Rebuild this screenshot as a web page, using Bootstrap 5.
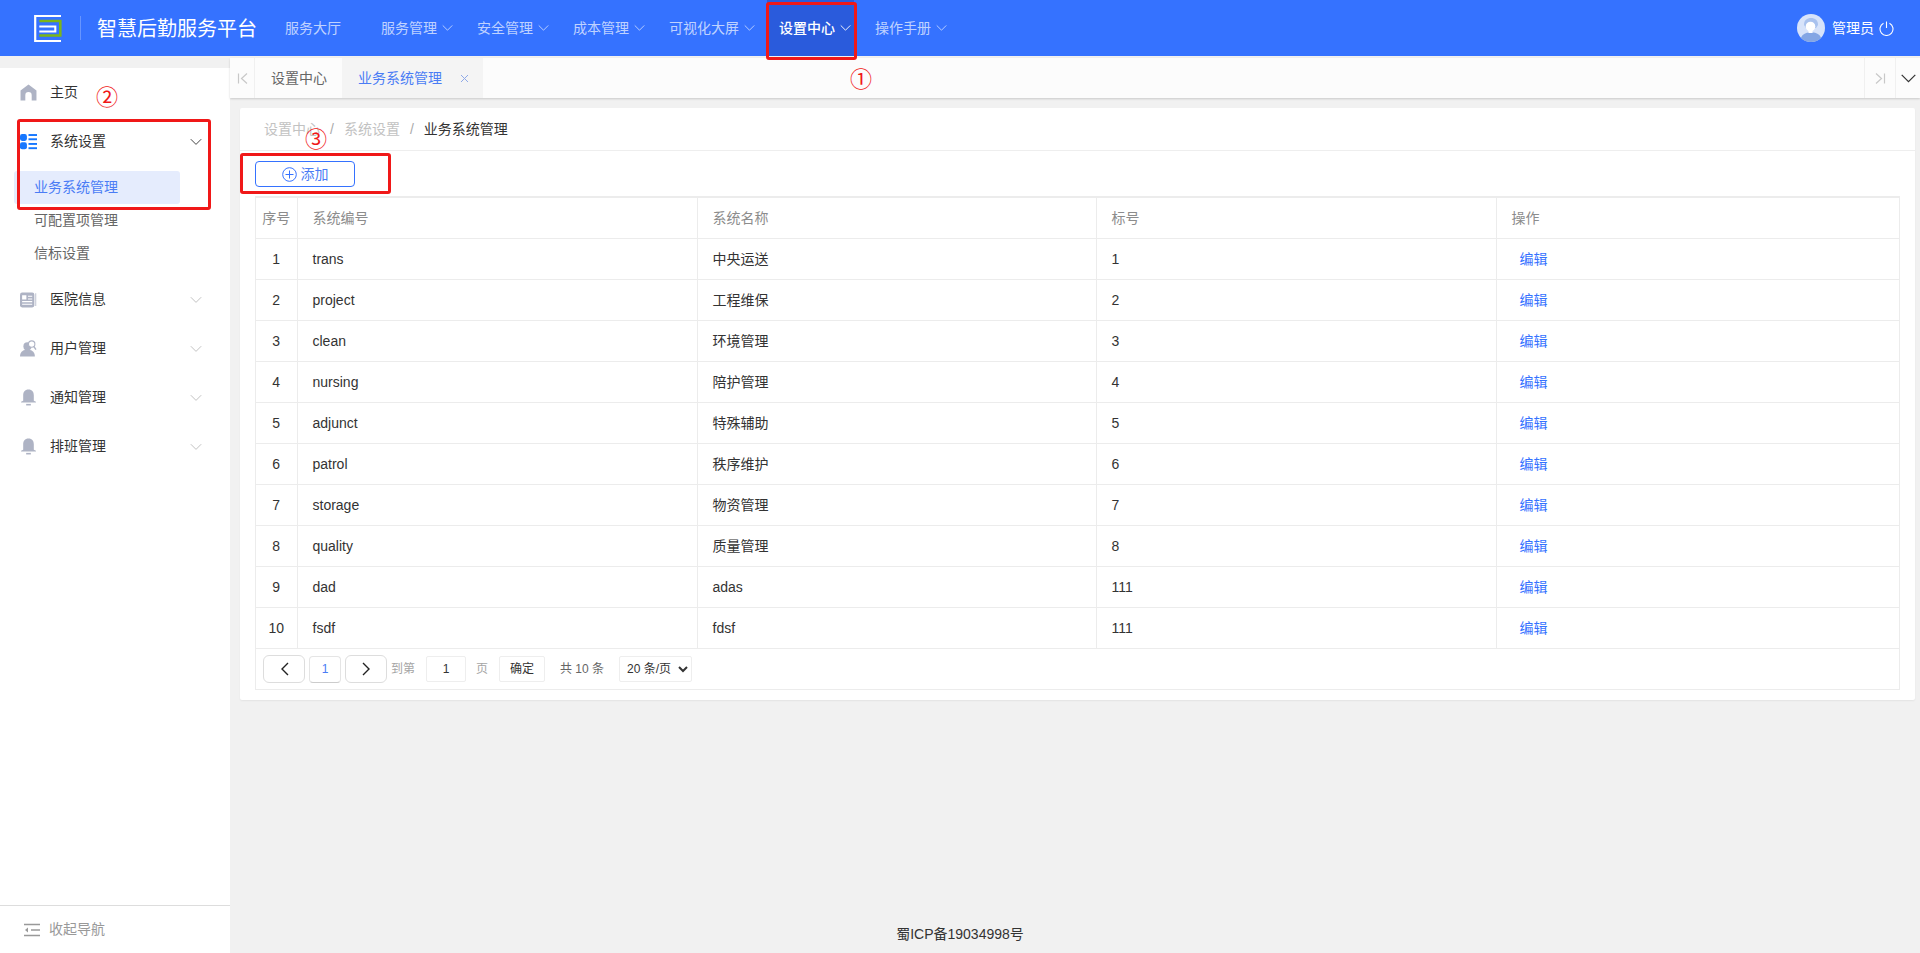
<!DOCTYPE html>
<html lang="zh-CN">
<head>
<meta charset="utf-8">
<title>智慧后勤服务平台</title>
<link rel="stylesheet" href="https://cdn.jsdelivr.net/npm/bootstrap@5.3.0/dist/css/bootstrap.min.css">
<style>
html,body{height:100%;}
body{font-family:"Liberation Sans","Noto Sans CJK SC",sans-serif;font-size:14px;background:#f1f1f1;color:#333;overflow:hidden;position:relative;}
.top-bar{height:56px;background:#3572ff;padding:0;flex-wrap:nowrap;}
.brand-logo{margin-left:34px;width:28px;height:27px;display:block;}
.brand-sep{width:1px;height:24px;background:rgba(255,255,255,.25);margin:0 16px 0 18px;}
.brand-name{font-size:20px;color:#fff;line-height:1;width:159px;white-space:nowrap;margin-right:17px;position:relative;top:1px;}
.top-link{height:56px;display:flex;align-items:center;gap:5px;padding:0 12px;color:rgba(255,255,255,.7);text-decoration:none;font-size:14px;white-space:nowrap;}
.top-link.plain{margin-right:16px;}
.top-link.on{background:#2a5bdc;color:#fff;font-weight:500;padding-right:3px;margin-right:9px;}
.top-link svg{width:11px;height:8px;}
.top-user{margin-left:auto;padding-right:26px;color:#fff;}
.top-user svg.ava{width:28px;height:28px;display:block;margin-right:7px;}
.top-user svg.pw{width:15px;height:15px;margin-left:5px;}
.page-body{height:calc(100% - 56px);}
.side-nav{width:230px;flex:none;margin-top:12px;background:#fff;}
.side-list{flex:1 1 auto;}
.side-item{height:49px;display:flex;align-items:center;padding:0 28px 0 20px;color:#333;}
.side-item .ico{width:17px;height:17px;margin-right:13px;flex:none;}
.side-item .chev{margin-left:auto;width:12px;height:8px;}
.sub-list{padding:5px 0;}
.sub-item{height:33px;display:flex;align-items:center;padding-left:34px;color:#666;}
.sub-item.on{background:#e5ecfd;color:#4a7cf5;width:166px;margin-left:14px;padding-left:20px;border-radius:3px;}
.side-foot{height:48px;border-top:1px solid #ddd;display:flex;align-items:center;padding-left:24px;color:#999;gap:9px;}
.side-foot svg{width:16px;height:14px;}
.main-area{min-width:0;position:relative;}
.tab-strip{height:40px;margin-top:2px;background:#fcfcfc;box-shadow:0 1px 2px rgba(0,0,0,.16);flex:none;}
.tab-edge{width:25px;display:flex;align-items:center;justify-content:center;border-right:1px solid #f0f0f0;}
.tab-edge svg{width:11px;height:11px;}
.tab-cell{padding:0 15px 0 16px;display:flex;align-items:center;color:#666;}
.tab-cell.on{background:#f4f4f4;color:#4a7cf5;width:141px;}
.tab-cell.on svg{width:9px;height:9px;margin-left:auto;margin-right:-1px;}
.tab-end{width:31px;border-left:1px solid #f0f0f0;display:flex;align-items:center;justify-content:center;}
.tab-end svg.a1{width:11px;height:11px;}
.tab-end.last{width:25px;}
.tab-end.last svg{width:15px;height:9px;}
.sheet{margin:10px 5px 0 10px;background:#fff;box-shadow:0 1px 2px rgba(0,0,0,.06);height:592px;border-radius:2px;padding:0 15px;flex:none;}
.crumbs{height:43px;margin:0 -15px;padding:0 24px;border-bottom:1px solid #eee;display:flex;align-items:center;color:#bbb;}
.crumbs .breadcrumb-item{color:#c2c2c2;}
.crumbs .breadcrumb-item+.breadcrumb-item{padding-left:10px;}
.crumbs .breadcrumb-item+.breadcrumb-item::before{padding-right:10px;color:#aaa;}
.crumbs .breadcrumb-item.active{color:#333;}
.add-row{padding:10px 0;height:45px;}
.add-btn{width:100px;height:26px;padding:0;font-size:14px;line-height:24px;color:#4a7cf5;border:1px solid #3572ff;border-radius:4px;display:flex;align-items:center;justify-content:center;gap:4px;background:#fff;}
.add-btn svg{width:15px;height:15px;}
.grid-box{border:1px solid #ececec;border-radius:0;}
.data-grid{table-layout:fixed;width:100%;margin:0;color:#333;border-color:#ececec;}
.data-grid td,.data-grid th{height:41px;padding:0 15px;vertical-align:middle;font-weight:400;font-size:14px;border-color:#ececec;}
.data-grid tr>*:first-child{padding:0;text-align:center;border-left:0;}
.data-grid tr>*:last-child{border-right:0;}
.data-grid thead th{color:#8c8c8c;border-top:0;}
.data-grid td.act{padding-left:23px;}
.data-grid td.act a{color:#3572ff;text-decoration:none;}
.col-seq{width:41px;}
.col-first{width:400px;}
.col-wide{width:400px;}
.col-mid{width:399px;}
.pager-row{height:40px;padding-left:7px;gap:0;font-size:12px;border-top:0;}
.pg-btn{width:42px;height:28px;padding:0;border:1px solid #ddd;border-radius:6px;background:#fff;display:flex;align-items:center;justify-content:center;}
.pg-btn svg{width:9px;height:14px;}
.pg-num{width:32px;height:27px;margin:0 4px;border:1px solid #e5e5e5;border-bottom-color:#ccc;border-radius:4px;color:#4a7cf5;display:flex;align-items:center;justify-content:center;background:#fff;}
.pg-txt{color:#a5a5a5;}
.pg-in{width:40px;height:26px;border:1px solid #eee;text-align:center;font-size:12px;color:#333;margin:0 10px 0 11px;line-height:24px;padding:0;outline:0;border-radius:2px;}
.pg-ok{width:46px;height:26px;border:1px solid #eee;background:#fff;font-size:12px;color:#333;padding:0;margin:0 15px 0 11px;border-radius:2px;}
.pg-total{color:#666;margin-right:15px;white-space:nowrap;}
.pg-sel{width:73px;height:26px;border:1px solid #eee;background:#fff;font-size:12px;color:#333;border-radius:2px;padding:0 2px 0 3px;}
.site-foot{margin-top:auto;height:37px;text-align:center;line-height:37px;color:#333;padding-right:230px;}
.mark-box{position:absolute;border:3px solid #f01818;border-radius:3px;pointer-events:none;}
.mark-no{position:absolute;color:#f01818;font-size:22px;line-height:22px;font-family:"Noto Sans CJK SC",sans-serif;}
.box-a{left:766px;top:2px;width:91px;height:58px;}
.box-b{left:17px;top:119px;width:194px;height:91px;}
.box-c{left:240px;top:153px;width:151px;height:41px;}
.no-a{left:850px;top:66px;}
.no-b{left:96px;top:84px;}
.no-c{left:305px;top:126px;}
</style>
</head>
<body>
<nav class="navbar top-bar d-flex align-items-center">
  <svg class="brand-logo" viewBox="0 0 28 27"><path d="M27 1H1.200v25H27" fill="none" stroke="#fff" stroke-width="2.200"/><path d="M5.300 6h21v14.500h-21" fill="none" stroke="#7cb518" stroke-width="2.600"/><path d="M5.300 11.500h16v5h-16" fill="none" stroke="#fff" stroke-width="2.100"/></svg>
  <span class="brand-sep"></span>
  <span class="brand-name">智慧后勤服务平台</span>
  <a class="top-link plain" href="#">服务大厅</a>
  <a class="top-link" href="#">服务管理<svg viewBox="0 0 12 8"><path d="M.8 1.200l5.200 5.200 5.200-5.200" fill="none" stroke="currentColor"/></svg></a>
  <a class="top-link" href="#">安全管理<svg viewBox="0 0 12 8"><path d="M.8 1.200l5.200 5.200 5.200-5.200" fill="none" stroke="currentColor"/></svg></a>
  <a class="top-link" href="#">成本管理<svg viewBox="0 0 12 8"><path d="M.8 1.200l5.200 5.200 5.200-5.200" fill="none" stroke="currentColor"/></svg></a>
  <a class="top-link" href="#">可视化大屏<svg viewBox="0 0 12 8"><path d="M.8 1.200l5.200 5.200 5.200-5.200" fill="none" stroke="currentColor"/></svg></a>
  <a class="top-link on" href="#">设置中心<svg viewBox="0 0 12 8"><path d="M.8 1.200l5.200 5.200 5.200-5.200" fill="none" stroke="currentColor"/></svg></a>
  <a class="top-link" href="#">操作手册<svg viewBox="0 0 12 8"><path d="M.8 1.200l5.200 5.200 5.200-5.200" fill="none" stroke="currentColor"/></svg></a>
  <div class="top-user d-flex align-items-center">
    <svg class="ava" viewBox="0 0 28 28"><circle cx="14" cy="14" r="14" fill="#d7e3fa"/><path d="M7 11c0-5 3-7 7-7s7 2 7 7l-2 3H9z" fill="#a9c2ee"/><circle cx="13.500" cy="12.500" r="4.800" fill="#fff"/><path d="M4 24c1-4 5-5 7-5.500h6c2 .5 6 1.500 7 5.500-2.500 2.500-6 4-10 4s-7.500-1.500-10-4z" fill="#84a6e4"/><rect x="11.500" y="16" width="4" height="3" fill="#fff"/></svg>
    <span>管理员</span>
    <svg class="pw" viewBox="0 0 15 15"><path d="M4.500 2.200a6.500 6.500 0 1 0 6 0" fill="none" stroke="#fff" stroke-width="1.100"/><path d="M7.500.5v6.500" stroke="#fff" stroke-width="1.100"/></svg>
  </div>
</nav>

<div class="page-body d-flex">
  <aside class="side-nav d-flex flex-column">
    <div class="side-list">
      <div class="side-item">
        <svg class="ico" viewBox="0 0 16 16"><path d="M8 .5L15.500 6v9.500h-4.500v-5a3 3 0 0 0-6 0v5H.5V6z" fill="#aeb3c4"/></svg>主页
      </div>
      <div class="side-item">
        <svg class="ico" viewBox="0 0 16 16" fill="#1677ff"><rect x="0" y="1" width="6.500" height="6.500" rx="2"/><rect x="0" y="8.800" width="6.500" height="6.500" rx="2"/><rect x="8" y="1" width="8" height="1.800"/><rect x="8" y="5" width="8" height="1.800"/><rect x="8" y="9.400" width="8" height="1.800"/><rect x="8" y="13.400" width="8" height="1.800"/></svg>系统设置
        <svg class="chev" viewBox="0 0 12 8"><path d="M.8 1.200l5.200 5.200 5.200-5.200" fill="none" stroke="#444"/></svg>
      </div>
      <div class="sub-list">
        <div class="sub-item on">业务系统管理</div>
        <div class="sub-item">可配置项管理</div>
        <div class="sub-item">信标设置</div>
      </div>
      <div class="side-item">
        <svg class="ico" viewBox="0 0 16 16"><rect x="0" y="1.500" width="13.500" height="14" rx="2" fill="#aeb3c4"/><path d="M14.800 2v12" stroke="#c4c8d4"/><rect x="2" y="4" width="4" height="4" fill="#fff"/><path d="M7.500 5h4M7.500 7.500h4M2 10h9.500M2 12.500h9.500" stroke="#fff"/></svg>医院信息
        <svg class="chev" viewBox="0 0 12 8"><path d="M.8 1.200l5.200 5.200 5.200-5.200" fill="none" stroke="#c2c2c2"/></svg>
      </div>
      <div class="side-item">
        <svg class="ico" viewBox="0 0 16 16"><circle cx="7" cy="6" r="3.800" fill="#aeb3c4"/><path d="M0 15.500c0-4 2.500-5.500 4.500-6h5c2 .5 4.500 2 4.500 6z" fill="#aeb3c4"/><circle cx="11" cy="3.800" r="3" fill="#fff" stroke="#aeb3c4"/><path d="M13 6l2 3" stroke="#aeb3c4" stroke-width="1.300"/></svg>用户管理
        <svg class="chev" viewBox="0 0 12 8"><path d="M.8 1.200l5.200 5.200 5.200-5.200" fill="none" stroke="#c2c2c2"/></svg>
      </div>
      <div class="side-item">
        <svg class="ico" viewBox="0 0 16 16" fill="#aeb3c4"><path d="M8 .5c3.500 0 5 2.500 5 5.500v5l2 1v.7H1V12l2-1V6c0-3 1.500-5.500 5-5.500z"/><rect x="5.800" y="14" width="4.400" height="1.500"/></svg>通知管理
        <svg class="chev" viewBox="0 0 12 8"><path d="M.8 1.200l5.200 5.200 5.200-5.200" fill="none" stroke="#c2c2c2"/></svg>
      </div>
      <div class="side-item">
        <svg class="ico" viewBox="0 0 16 16" fill="#aeb3c4"><path d="M8 .5c3.500 0 5 2.500 5 5.500v5l2 1v.7H1V12l2-1V6c0-3 1.500-5.500 5-5.500z"/><rect x="5.800" y="14" width="4.400" height="1.500"/></svg>排班管理
        <svg class="chev" viewBox="0 0 12 8"><path d="M.8 1.200l5.200 5.200 5.200-5.200" fill="none" stroke="#c2c2c2"/></svg>
      </div>
    </div>
    <div class="side-foot">
      <svg viewBox="0 0 16 14"><path d="M0 1.500h16M7 7h9M0 12.500h16" stroke="#999" stroke-width="1.500"/><path d="M4 4.500L1 7l3 2.500z" fill="#999"/></svg>
      <span>收起导航</span>
    </div>
  </aside>

  <main class="main-area flex-grow-1 d-flex flex-column">
    <div class="tab-strip d-flex">
      <div class="tab-edge"><svg viewBox="0 0 11 11"><path d="M1.500 .5v10M10 .5L4.500 5.500 10 10.500" fill="none" stroke="#c8c8c8" stroke-width="1.200"/></svg></div>
      <div class="tab-cell">设置中心</div>
      <div class="tab-cell on">业务系统管理<svg viewBox="0 0 9 9"><path d="M1 1l7 7M8 1L1 8" stroke="#8fa9e8"/></svg></div>
      <div class="tab-end ms-auto"><svg class="a1" viewBox="0 0 11 11"><path d="M9.500 .5v10M1 .5l5.500 5L1 10.500" fill="none" stroke="#c8c8c8" stroke-width="1.200"/></svg></div>
      <div class="tab-end last"><svg viewBox="0 0 15 9"><path d="M.7.8l6.800 6.800L14.300.8" fill="none" stroke="#333" stroke-width="1.200"/></svg></div>
    </div>

    <section class="sheet">
      <nav class="crumbs">
        <ol class="breadcrumb mb-0">
          <li class="breadcrumb-item">设置中心</li>
          <li class="breadcrumb-item">系统设置</li>
          <li class="breadcrumb-item active">业务系统管理</li>
        </ol>
      </nav>
      <div class="add-row">
        <button class="btn add-btn" type="button"><svg viewBox="0 0 15 15"><circle cx="7.500" cy="7.500" r="6.800" fill="none" stroke="#3572ff"/><path d="M7.500 3.500v8M3.500 7.500h8" stroke="#3572ff"/></svg>添加</button>
      </div>
      <div class="grid-box">
        <table class="table table-bordered data-grid">
          <colgroup><col class="col-seq"><col class="col-first"><col class="col-mid"><col class="col-wide"><col></colgroup>
          <thead><tr><th>序号</th><th>系统编号</th><th>系统名称</th><th>标号</th><th>操作</th></tr></thead>
          <tbody>
            <tr><td>1</td><td>trans</td><td>中央运送</td><td>1</td><td class="act"><a href="#">编辑</a></td></tr>
            <tr><td>2</td><td>project</td><td>工程维保</td><td>2</td><td class="act"><a href="#">编辑</a></td></tr>
            <tr><td>3</td><td>clean</td><td>环境管理</td><td>3</td><td class="act"><a href="#">编辑</a></td></tr>
            <tr><td>4</td><td>nursing</td><td>陪护管理</td><td>4</td><td class="act"><a href="#">编辑</a></td></tr>
            <tr><td>5</td><td>adjunct</td><td>特殊辅助</td><td>5</td><td class="act"><a href="#">编辑</a></td></tr>
            <tr><td>6</td><td>patrol</td><td>秩序维护</td><td>6</td><td class="act"><a href="#">编辑</a></td></tr>
            <tr><td>7</td><td>storage</td><td>物资管理</td><td>7</td><td class="act"><a href="#">编辑</a></td></tr>
            <tr><td>8</td><td>quality</td><td>质量管理</td><td>8</td><td class="act"><a href="#">编辑</a></td></tr>
            <tr><td>9</td><td>dad</td><td>adas</td><td>111</td><td class="act"><a href="#">编辑</a></td></tr>
            <tr><td>10</td><td>fsdf</td><td>fdsf</td><td>111</td><td class="act"><a href="#">编辑</a></td></tr>
          </tbody>
        </table>
        <div class="pager-row d-flex align-items-center">
          <button class="pg-btn" type="button"><svg viewBox="0 0 9 14"><path d="M8 1L2 7l6 6" fill="none" stroke="#222" stroke-width="1.400"/></svg></button>
          <span class="pg-num">1</span>
          <button class="pg-btn" type="button"><svg viewBox="0 0 9 14"><path d="M1 1l6 6-6 6" fill="none" stroke="#222" stroke-width="1.400"/></svg></button>
          <span class="pg-txt ms-1">到第</span>
          <input class="pg-in" value="1" aria-label="页码">
          <span class="pg-txt">页</span>
          <button class="pg-ok" type="button">确定</button>
          <span class="pg-total">共 10 条</span>
          <select class="pg-sel" aria-label="每页条数"><option>20 条/页</option></select>
        </div>
      </div>
    </section>

    <footer class="site-foot">蜀ICP备19034998号</footer>
  </main>
</div>

<div class="mark-box box-a"></div>
<div class="mark-box box-b"></div>
<div class="mark-box box-c"></div>
<span class="mark-no no-a">①</span>
<span class="mark-no no-b">②</span>
<span class="mark-no no-c">③</span>
<script src="https://cdn.jsdelivr.net/npm/bootstrap@5.3.0/dist/js/bootstrap.bundle.min.js"></script>
</body>
</html>
